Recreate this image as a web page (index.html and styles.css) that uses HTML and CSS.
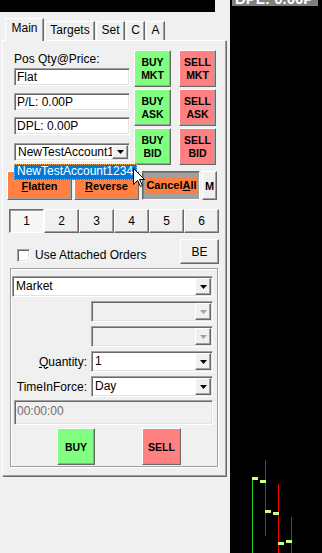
FILE: index.html
```html
<!DOCTYPE html>
<html lang="en">
<head>
  <meta charset="UTF-8">
  <title>Order Entry</title>
  <link rel="stylesheet" href="styles.css">
</head>
<body>
  <div class="app">
    <div class="left">
      <div class="topbar"></div>
      <div class="tabs">
        <div class="tab active t-main">Main</div>
        <div class="tab t-targets">Targets</div>
        <div class="tab t-set">Set</div>
        <div class="tab t-c">C</div>
        <div class="tab t-a">A</div>
      </div>

      <div class="panel">
        <div class="top">
          <div class="info">
            <div class="lbl">Pos Qty@Price:</div>
            <div class="field f-pos">Flat</div>
            <div class="field f-pl">P/L: 0.00P</div>
            <div class="field f-dpl">DPL: 0.00P</div>
            <div class="combo acct">
              <span class="val">NewTestAccount1234</span>
              <span class="drop"><svg width="7" height="4"><polygon points="0,0 7,0 3.5,4" fill="#000"/></svg></span>
            </div>
          </div>
          <div class="trade">
            <button class="tb buy">BUY<br>MKT</button>
            <button class="tb sell">SELL<br>MKT</button>
            <button class="tb buy">BUY<br>ASK</button>
            <button class="tb sell">SELL<br>ASK</button>
            <button class="tb buy">BUY<br>BID</button>
            <button class="tb sell">SELL<br>BID</button>
          </div>
        </div>

        <div class="actions">
          <button class="act flatten"><u>F</u>latten</button>
          <button class="act reverse"><u>R</u>everse</button>
          <button class="act cancel"><span class="cfill">Cancel<u>A</u>ll</span></button>
          <button class="act mbtn">M</button>
        </div>

        <div class="nums">
          <button class="num on">1</button>
          <button class="num">2</button>
          <button class="num">3</button>
          <button class="num">4</button>
          <button class="num">5</button>
          <button class="num">6</button>
        </div>

        <div class="attach">
          <label class="chk"><span class="box"></span>Use Attached Orders</label>
          <button class="be">BE</button>
        </div>

        <div class="group">
          <div class="combo market">
            <span class="val">Market</span>
            <span class="drop"><svg width="7" height="4"><polygon points="0,0 7,0 3.5,4" fill="#000"/></svg></span>
          </div>
          <div class="row">
            <span class="rl"></span>
            <div class="combo off">
              <span class="val"></span>
              <span class="drop"><svg width="7" height="4"><polygon points="0,0 7,0 3.5,4" fill="#a0a0a0"/></svg></span>
            </div>
          </div>
          <div class="row">
            <span class="rl"></span>
            <div class="combo off">
              <span class="val"></span>
              <span class="drop"><svg width="7" height="4"><polygon points="0,0 7,0 3.5,4" fill="#a0a0a0"/></svg></span>
            </div>
          </div>
          <div class="row">
            <span class="rl"><u>Q</u>uantity:</span>
            <div class="combo">
              <span class="val">1</span>
              <span class="drop"><svg width="7" height="4"><polygon points="0,0 7,0 3.5,4" fill="#000"/></svg></span>
            </div>
          </div>
          <div class="row">
            <span class="rl">TimeInForce:</span>
            <div class="combo">
              <span class="val">Day</span>
              <span class="drop"><svg width="7" height="4"><polygon points="0,0 7,0 3.5,4" fill="#000"/></svg></span>
            </div>
          </div>
          <div class="timebox">00:00:00</div>
          <div class="sides">
            <button class="side buy">BUY</button>
            <button class="side sell">SELL</button>
          </div>
        </div>

        <!-- open account dropdown + mouse pointer -->
        <div class="acct-list">NewTestAccount1234</div>
        <svg class="pointer" width="13" height="20" viewBox="0 0 13 20">
          <path d="M0.5 0.5V16.5L4.5 12.5L7.5 18.5L9.5 17.5L6.5 11.5H11.5Z" fill="#fff" stroke="#000" stroke-width="1"/>
        </svg>
      </div>
    </div>

    <div class="chart">
      <div class="dpl"><span>DPL: 0.00P</span></div>
      <svg class="bars" width="92" height="547" viewBox="0 6 92 547">
        <line x1="22.5" y1="478" x2="22.5" y2="553" stroke="#2fd02f"/>
        <line x1="35.5" y1="460" x2="35.5" y2="536" stroke="#ff0000"/>
        <line x1="48.5" y1="484" x2="48.5" y2="553" stroke="#ff0000"/>
        <line x1="61.5" y1="517" x2="61.5" y2="553" stroke="#ff0000"/>
        <rect x="22" y="477" width="6" height="3" fill="#ccff88"/>
        <rect x="30" y="480" width="6" height="3" fill="#ccff88"/>
        <rect x="35" y="510" width="6" height="3" fill="#ccff88"/>
        <rect x="43" y="512" width="6" height="3" fill="#ccff88"/>
        <rect x="48" y="542" width="6" height="3" fill="#ccff88"/>
        <rect x="56" y="540" width="6" height="3" fill="#ccff88"/>
      </svg>
    </div>
  </div>
</body>
</html>
```

FILE: styles.css
```css
* {
  box-sizing: border-box;
}
body {
  margin: 0;
  background: #f0f0f0;
  font-family: "Liberation Sans", Arial, sans-serif;
  font-size: 12px;
  color: #000;
}
button {
  font: inherit;
  color: #000;
  margin: 0;
  padding: 0;
}
.app {
  display: flex;
  height: 553px;
  overflow: hidden;
}
.left {
  width: 230px;
}
.topbar {
  width: 215px;
  height: 12px;
  background: #000;
}

/* tab strip */
.tabs {
  display: flex;
  align-items: flex-end;
  height: 28px;
  padding-left: 5px;
}
.tab {
  height: 19px;
  margin-left: 1px;
  padding-top: 1px;
  line-height: 14px;
  text-align: center;
  border-left: 1px solid #fff;
  border-top: 1px solid #fff;
  border-right: 1px solid #696969;
  box-shadow: inset -1px 0 #a0a0a0;
}
.tab.active {
  position: relative;
  z-index: 1;
  height: 23px;
  margin-left: 0;
  margin-bottom: -1px;
  padding-top: 2px;
  background: #f0f0f0;
}
.t-main { width: 39px; }
.t-targets { width: 50px; }
.t-set { width: 29px; }
.t-c { width: 19px; }
.t-a { width: 19px; }

.panel {
  position: relative;
  margin-left: 2px;
  width: 224px;
  height: 436px;
  border: 1px solid;
  border-color: #fff #a0a0a0 #a0a0a0 #fff;
  box-shadow: 1px 1px 0 #696969;
}

/* shared 3d looks */
.field, .combo, .timebox {
  border: 1px solid;
  border-color: #a0a0a0 #fff #fff #a0a0a0;
  box-shadow: inset 1px 1px #696969, inset -1px -1px #e3e3e3;
  background: #fff;
}
.tb, .act, .num, .be, .side, .drop {
  border: 1px solid;
  border-color: #fff #696969 #696969 #fff;
  box-shadow: inset -1px -1px #a0a0a0;
  background: #f0f0f0;
}

.top {
  display: flex;
  padding: 9px 0 0 11px;
}
.info {
  width: 116px;
  display: flex;
  flex-direction: column;
}
.lbl {
  margin-top: 2px;
  height: 14px;
  line-height: 14px;
}
.field {
  height: 18px;
  line-height: 16px;
  padding-left: 2px;
}
.f-pos { margin-top: 2px; }
.f-pl { margin-top: 7px; }
.f-dpl { margin-top: 6px; }

.combo {
  display: flex;
  height: 21px;
}
.combo .val {
  flex: 1;
  padding-left: 3px;
  line-height: 19px;
  white-space: nowrap;
  overflow: hidden;
}
.drop {
  width: 16px;
  display: flex;
  align-items: center;
  justify-content: center;
  margin: 1px 1px 1px 0;
}
.drop svg {
  display: block;
}
.combo.acct {
  margin-top: 8px;
  height: 18px;
}
.combo.acct .val {
  line-height: 16px;
}
.combo.off {
  background: #f0f0f0;
}

.trade {
  margin-left: 4px;
  display: grid;
  grid-template-columns: 37px 37px;
  grid-auto-rows: 37px;
  column-gap: 8px;
  row-gap: 2px;
}
.tb {
  font-size: 10.5px;
  font-weight: bold;
  line-height: 13px;
}
.buy { background: #80ff80; }
.sell { background: #ff8080; }

.actions {
  display: flex;
  margin: 6px 0 0 4px;
  height: 29px;
}
.act {
  height: 29px;
  font-size: 11px;
  font-weight: bold;
  background: #ff8040;
}
.flatten { width: 65px; }
.reverse { width: 65px; margin-left: 2px; }
.cancel {
  width: 58px;
  margin-left: 3px;
  padding: 5px 2px 6px 3px;
  background: #a0a0a0;
  border-color: #696969 #fff #fff #696969;
  box-shadow: inset 1px 1px #808080;
}
.cfill {
  display: block;
  height: 100%;
  line-height: 16px;
  background: #ff8040;
}
.mbtn {
  width: 15px;
  margin-left: 2px;
  background: #f0f0f0;
}

.nums {
  display: flex;
  margin: 9px 0 0 6px;
}
.num {
  width: 35px;
  height: 24px;
}
.num.on {
  background: #f7f7f7;
  border-color: #696969 #fff #fff #696969;
  box-shadow: inset 1px 1px #a0a0a0;
}

.attach {
  display: flex;
  justify-content: space-between;
  align-items: flex-end;
  height: 25px;
  margin: 6px 6px 0 14px;
}
.chk {
  display: flex;
  align-items: center;
  margin-bottom: 2px;
  line-height: 14px;
}
.chk .box {
  width: 13px;
  height: 13px;
  margin-right: 5px;
  background: #fff;
  border: 1px solid;
  border-color: #a0a0a0 #fff #fff #a0a0a0;
  box-shadow: inset 1px 1px #696969, inset -1px -1px #e3e3e3;
}
.be {
  width: 39px;
  height: 25px;
}

.group {
  margin: 4px 0 0 7px;
  width: 208px;
  height: 199px;
  border: 1px solid #a0a0a0;
  box-shadow: inset 1px 1px #fff, 1px 1px 0 #fff;
}
.combo.market {
  margin: 7px 0 0 1px;
  width: 201px;
}
.row {
  display: flex;
  align-items: center;
  margin-top: 4px;
}
.rl {
  width: 76px;
  text-align: right;
}
.row .combo {
  width: 122px;
  margin-left: 4px;
}
.timebox {
  margin: 3px 0 0 3px;
  width: 199px;
  height: 25px;
  padding-left: 2px;
  line-height: 21px;
  background: #f0f0f0;
  color: #6d6d6d;
}
.sides {
  display: flex;
  margin-top: 3px;
}
.side {
  height: 37px;
  font-size: 10.5px;
  font-weight: bold;
}
.side.buy { width: 38px; margin-left: 46px; }
.side.sell { width: 39px; margin-left: 47px; }

.acct-list {
  position: absolute;
  left: 11px;
  top: 123px;
  width: 123px;
  height: 16px;
  padding-left: 3px;
  line-height: 15px;
  background: #0078d7;
  color: #fff;
  outline: 1px dotted #e8a33c;
  outline-offset: -1px;
}
.pointer {
  position: absolute;
  left: 130px;
  top: 127px;
}

/* right side chart */
.chart {
  width: 92px;
  background: #000;
}
.dpl {
  margin-left: 2px;
  width: 86px;
  height: 6px;
  padding-left: 3px;
  overflow: hidden;
  background: #808080;
  color: #fff;
  font-size: 15px;
  font-weight: bold;
  line-height: 15px;
}
.dpl span {
  display: block;
  margin-top: -9px;
}
.bars {
  display: block;
}
```
